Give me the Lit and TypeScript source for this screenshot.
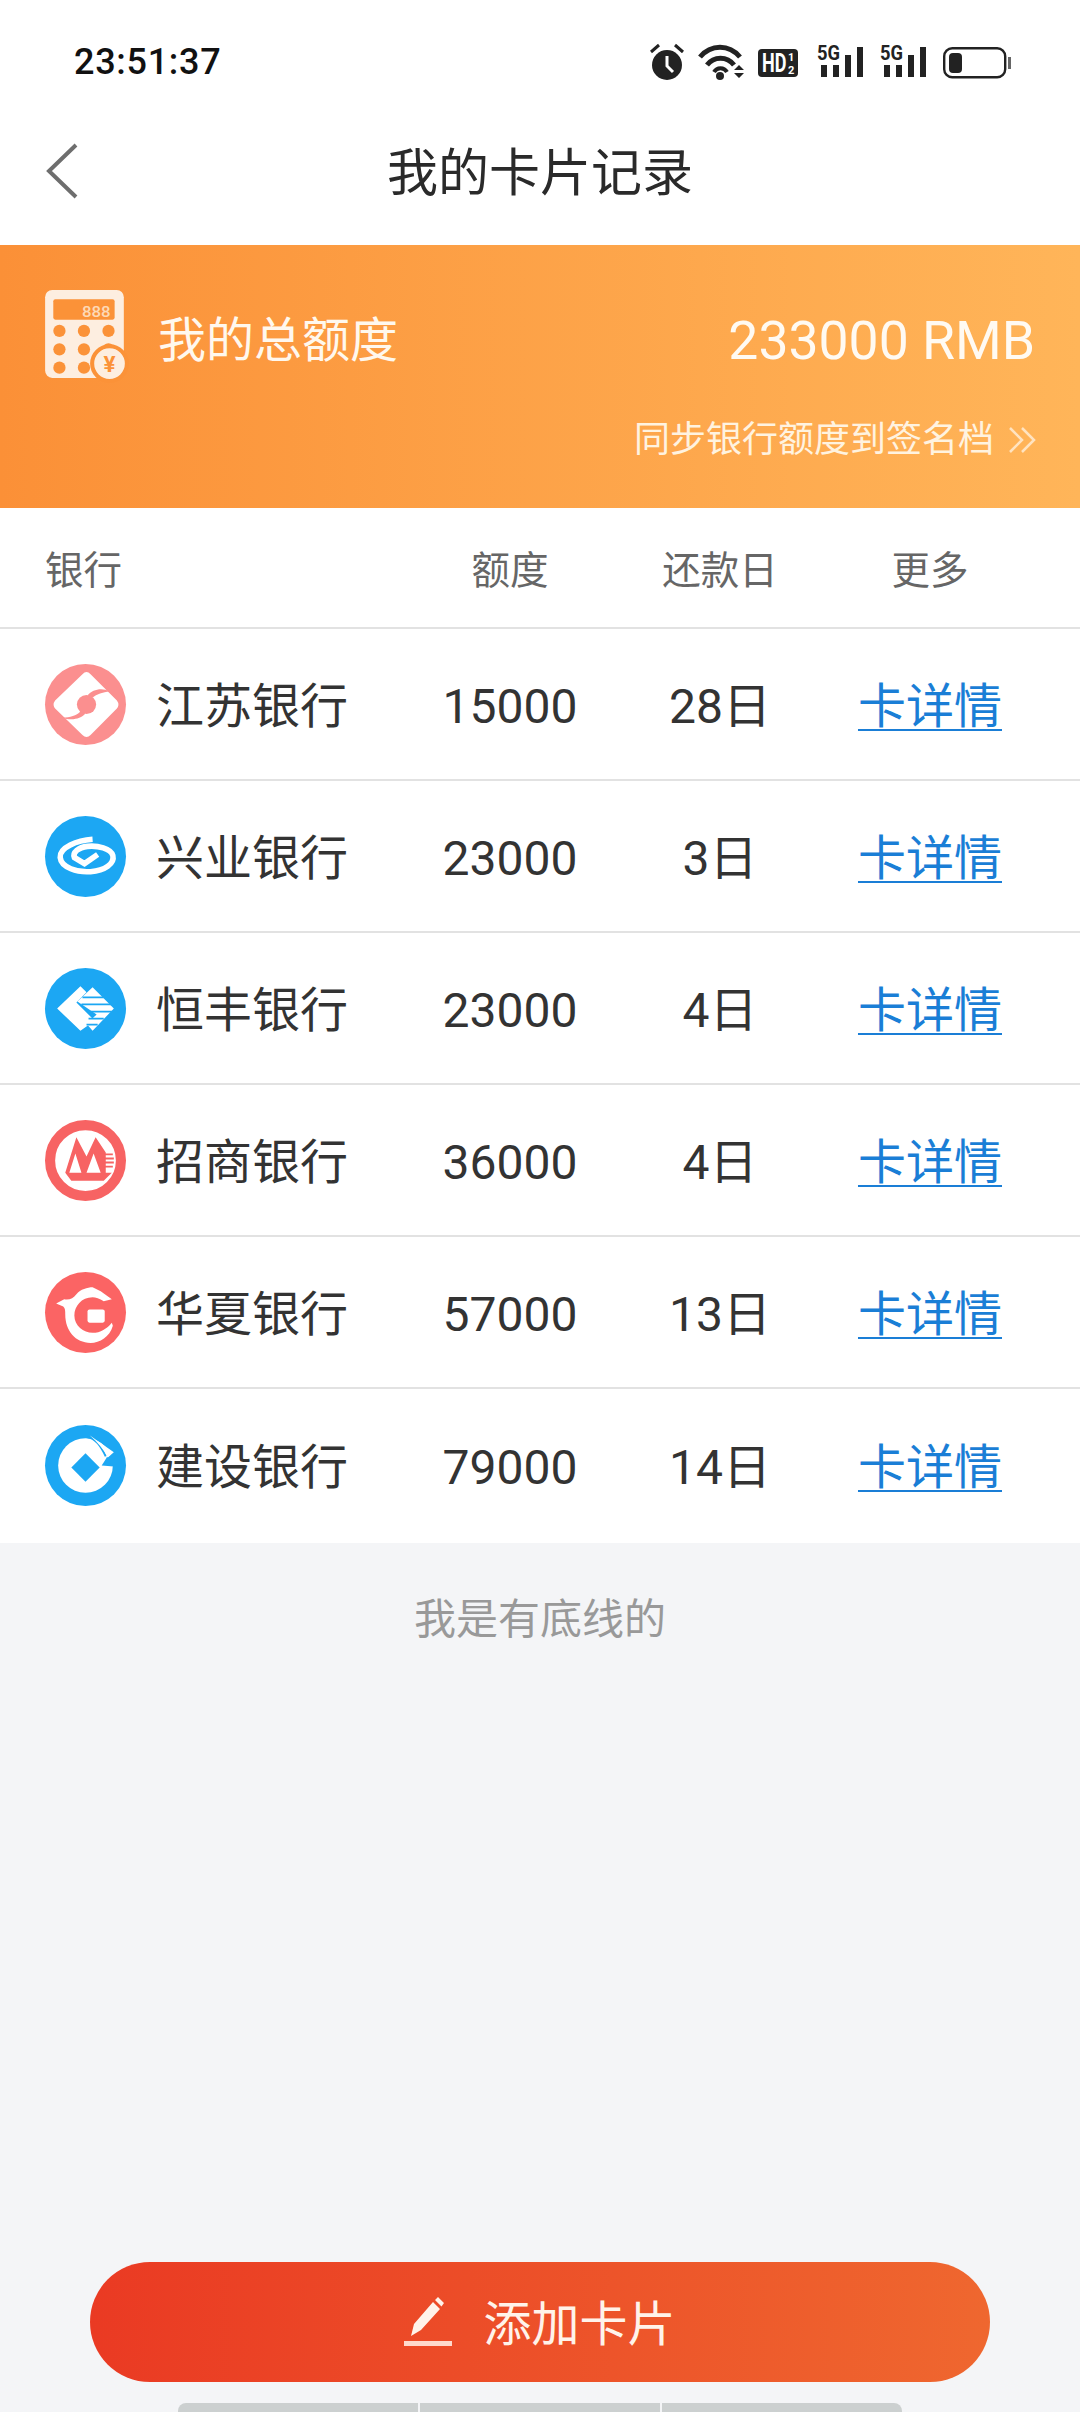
import { LitElement, html, css, svg } from "lit";
import { customElement } from "lit/decorators.js";

const logos: Record<string, unknown> = {
  js: svg`<circle cx="40" cy="40" r="40" fill="#fb8f8f"/>
    <path d="M41 8 Q43 8 45 10 L71 36 Q74 40 71 44 L45 70 Q41 74 37 70 L10 44 Q7 40 10 36 L37 10 Q39 8 41 8Z" fill="#fff"/>
    <circle cx="41" cy="40" r="9.5" fill="#fb8f8f"/>
    <path d="M64 27 C56 23 47 25 42 31 L47 33 C51 30 57 28 64 27Z M17 53 C25 56 35 55 40 49 L35 47 C31 51 25 53 17 53Z" fill="#fb8f8f"/>`,
  xy: svg`<circle cx="40" cy="40" r="40" fill="#1ca7f3"/>
    <path d="M47 23 C32 24 14 31 15 41 C16 51 32 56 45 55 C59 54 69 47 67 39 C65 32 52 29 42 30 C33 31 27 36 29 41 L39 47 L52 38" fill="none" stroke="#fff" stroke-width="5.5"/>`,
  hf: svg`<circle cx="40" cy="40" r="40" fill="#1ca7f3"/>
    <path d="M12 40 L35 18 L41 24 L31 34 L49 52 L35 62Z" fill="#fff"/>
    <path d="M47 19 L68 40 L47 62 L41 55 L51 46 L32 33Z" fill="#fff"/>
    <path d="M37 29 H58 M36 36 H66 M45 43 H66 M43 50 H58 M41 56 H52" stroke="#1ca7f3" stroke-width="1.8"/>`,
  zs: svg`<circle cx="40" cy="40" r="35" fill="#fff" stroke="#f76363" stroke-width="10"/>
    <path d="M20 52 L31 17 L41 36 L50 17 L60 32 L60 52 L66 52 L58 60 L26 60Z" fill="#f76363"/>
    <path d="M24 52 L30 33 L36 52Z M41 52 L48 33 L55 52Z" fill="#fff"/>
    <path d="M55 34 H67 M56 38 H68 M57 42 H68 M58 46 H67" stroke="#f76363" stroke-width="1.8"/>`,
  hx: svg`<circle cx="40" cy="40" r="40" fill="#fb6464"/>
    <path d="M11 31 L19 27 C24 28 28 26 31 22 C35 17 42 15 47 15 L55 19 L66 27 L58 29 C54 26 50 25 47 25 C36 25 29 34 29 43 C29 53 38 60 47 60 C55 60 61 56 66 50 L67 53 C64 64 54 70 45 70 C30 70 20 58 20 42 C20 38 20 36 18 34Z" fill="#fff"/>
    <rect x="42" y="37" width="17" height="13" rx="2" fill="#fff"/>`,
  js2: svg`<circle cx="40" cy="40" r="40" fill="#1ca7f3"/>
    <circle cx="40" cy="40" r="27" fill="#fff"/>
    <path d="M40 28 L54 42 L40 56 L26 42Z" fill="#1ca7f3"/>
    <path d="M56 40 L68 41 L70 26 L61 32Z" fill="#1ca7f3"/>
    <path d="M42 12 C50 13 56 22 60 31" fill="none" stroke="#1ca7f3" stroke-width="2"/>
    <path d="M44 10 L68 27 L62 32 C58 24 52 17 44 10Z" fill="#fff"/>`,
};

const rows = [
  ["js", "江苏银行", "15000", "28日"],
  ["xy", "兴业银行", "23000", "3日"],
  ["hf", "恒丰银行", "23000", "4日"],
  ["zs", "招商银行", "36000", "4日"],
  ["hx", "华夏银行", "57000", "13日"],
  ["js2", "建设银行", "79000", "14日"],
];

@customElement("app-root")
export class AppRoot extends LitElement {
  static styles = css`
    :host {
      display: flex;
      flex-direction: column;
      width: 1080px;
      height: 2412px;
      overflow: hidden;
      background: #f4f5f7;
      font-family: "Roboto", "Noto Sans CJK SC", sans-serif;
      color: #333;
    }
    svg { display: block; flex: none; overflow: visible; }
    .status {
      height: 124px;
      background: #fff;
      display: flex;
      align-items: center;
      box-sizing: border-box;
      padding: 0 69px 0 74px;
    }
    .time { font-size: 36px; font-weight: 500; letter-spacing: 0.7px; color: #111; margin-right: auto; }
    .icons { display: flex; align-items: flex-start; height: 36px; }
    .alarm { margin-right: 15px; }
    .wifi { margin-right: 13px; }
    .hd { margin: 5px 19px 0 0; }
    .sig { margin: -4px 17px 0 0; }
    .bat { margin-top: 3px; }
    .nav {
      height: 121px;
      background: #fff;
      display: grid;
      grid-template-columns: 1fr auto 1fr;
      align-items: center;
      padding-bottom: 28px;
      box-sizing: border-box;
    }
    .nav svg { margin-left: 46px; }
    .title { font-size: 51px; line-height: 60px; padding-top: 6px; color: #2a2a2a; }
    .banner {
      height: 263px;
      box-sizing: border-box;
      padding: 44px 46px 0;
      color: #fff;
      background: linear-gradient(90deg, #fb9037, #ffb559);
    }
    .b1 { display: flex; align-items: center; height: 92px; gap: 31px; }
    .b1 svg { margin-left: -1px; }
    .b1 .label { font-size: 48px; line-height: 60px; padding-top: 11px; color: #fff8ee; }
    .b1 .amount { margin-left: auto; font-size: 53.5px; line-height: 60px; padding-top: 11px; color: #fffaf2; margin-right: -1px; }
    .b2 { display: flex; justify-content: flex-end; align-items: center; gap: 14px; margin-top: 34px; font-size: 36px; line-height: 50px; color: #fff3e0; margin-right: -2px; }
    .thead, .row {
      display: grid;
      grid-template-columns: 358px 214px 206px 214px;
      padding-left: 45px;
      align-items: center;
      background: #fff;
      text-align: center;
      border-bottom: 2px solid #e2e2e2;
      box-sizing: border-box;
    }
    .thead { height: 121px; font-size: 38.5px; line-height: 50px; padding-top: 6px; color: #666; }
    .row { height: 152px; font-size: 48px; line-height: 60px; }
    .row > span, .bank > span { padding-top: 6px; }
    .row.last { height: 154px; border-bottom: none; padding-bottom: 2px; }
    .thead > :first-child { text-align: left; }
    .bank { display: flex; align-items: center; gap: 30px; }
    .link { color: #1a7ed6; text-decoration: underline; text-underline-offset: 6px; text-decoration-thickness: 2px; }
    .end { text-align: center; font-size: 42px; line-height: 60px; color: #999; padding-top: 47px; }
    .spacer { flex: 1; }
    .btn {
      margin: 0 90px;
      height: 120px;
      border-radius: 60px;
      display: flex;
      align-items: center;
      justify-content: center;
      gap: 31px;
      font-size: 48px;
      line-height: 60px;
      color: #fff3ea;
      background: linear-gradient(90deg, #ea3a23, #ef672f);
    }
    .btn span { padding-top: 6px; }
    .home { display: flex; justify-content: center; gap: 2px; margin-top: 21px; height: 9px; }
    .home i { background: #ccd0d0; width: 240px; }
    .home i:first-child { border-radius: 8px 0 0 0; }
    .home i:last-child { border-radius: 0 8px 0 0; }
  `;

  render() {
    return html`
      <div class="status">
        <span class="time">23:51:37</span>
        <div class="icons">
          <svg class="alarm" width="34" height="36" viewBox="0 0 34 36">
            <circle cx="17" cy="21" r="15" fill="#222"/>
            <path d="M17 12 V22 L23 28" fill="none" stroke="#fff" stroke-width="3"/>
            <path d="M1 8 L9 1 M33 8 L25 1" stroke="#222" stroke-width="3"/>
          </svg>
          <svg class="wifi" width="46" height="36" viewBox="0 0 46 36">
            <path d="M1 13 C12 0 30 0 41 13" fill="none" stroke="#222" stroke-width="5"/>
            <path d="M8 21 C15 12 28 12 35 21" fill="none" stroke="#222" stroke-width="5"/>
            <path d="M15 28 C18 23 25 23 28 28" fill="none" stroke="#222" stroke-width="4"/>
            <circle cx="21" cy="32" r="4" fill="#222"/>
            <path d="M35 26 L40 21 L45 26Z M35 29 H45 L40 34Z" fill="#222"/>
          </svg>
          <svg class="hd" width="40" height="28" viewBox="0 0 40 28">
            <rect width="40" height="28" rx="4" fill="#222"/>
            <text transform="translate(4 23) scale(.72 1)" font-family="Roboto" font-size="25" font-weight="700" fill="#fff">HD</text>
            <text x="30" y="12" font-family="Roboto" font-size="11" font-weight="700" fill="#fff">1</text>
            <text x="30" y="25" font-family="Roboto" font-size="11" font-weight="700" fill="#fff">2</text>
          </svg>
          ${[0, 1].map(
            () => svg`<svg class="sig" width="46" height="38" viewBox="0 -4 46 38">
              <text x="0" y="16" font-family="Roboto" font-size="21" font-weight="700" fill="#222" textLength="23" lengthAdjust="spacingAndGlyphs">5G</text>
              <rect x="4" y="21" width="6" height="12" fill="#222"/>
              <rect x="16" y="21" width="6" height="12" fill="#222"/>
              <rect x="28" y="11" width="6" height="22" fill="#222"/>
              <rect x="40" y="3" width="6" height="30" fill="#222"/>
            </svg>`
          )}
          <svg class="bat" width="68" height="32" viewBox="0 0 68 32">
            <rect x="1.2" y="1.2" width="61" height="29" rx="8" fill="none" stroke="#222" stroke-width="2.4"/>
            <rect x="6" y="6" width="13" height="20" rx="4" fill="#222"/>
            <rect x="65" y="10" width="3" height="12" fill="#666"/>
          </svg>
        </div>
      </div>
      <div class="nav">
        <svg width="32" height="56" viewBox="0 0 32 56">
          <path d="M30 2 L3 28 L30 54" fill="none" stroke="#6e6e6e" stroke-width="4"/>
        </svg>
        <div class="title">我的卡片记录</div>
        <span></span>
      </div>
      <div class="banner">
        <div class="b1">
          <svg width="82" height="92" viewBox="0 0 80 90">
            <rect x="0" y="1" width="77" height="86" rx="7" fill="#fdeee0"/>
            <rect x="8" y="10" width="60" height="20" rx="2" fill="#fb9238"/>
            <text x="36" y="27" font-family="Roboto" font-size="15" font-weight="500" fill="#fdd9b6" textLength="28" lengthAdjust="spacingAndGlyphs">888</text>
            ${[41, 59, 77].map((y) => [14, 38, 62].map((x) => svg`<circle cx=${x} cy=${y} r="6" fill="#fb9238"/>`))}
            <circle cx="63" cy="73" r="17" fill="#fdeee0" stroke="#fb9238" stroke-width="4"/>
            <text x="63" y="81" text-anchor="middle" font-family="Roboto" font-size="22" font-weight="700" fill="#fb9238">¥</text>
          </svg>
          <span class="label">我的总额度</span>
          <span class="amount">233000 RMB</span>
        </div>
        <div class="b2">
          <span>同步银行额度到签名档</span>
          <svg width="28" height="30" viewBox="0 0 28 30">
            <path d="M2 3 L14 15 L2 27 M14 3 L26 15 L14 27" fill="none" stroke="#ffe3c0" stroke-width="2.5"/>
          </svg>
        </div>
      </div>
      <div class="thead">
        <span>银行</span><span>额度</span><span>还款日</span><span>更多</span>
      </div>
      ${rows.map(
        ([k, name, limit, day], i) => html`
          <div class="row ${i === rows.length - 1 ? "last" : ""}">
            <div class="bank">
              <svg width="81" height="81" viewBox="0 0 80 80">${logos[k]}</svg>
              <span>${name}</span>
            </div>
            <span>${limit}</span>
            <span>${day}</span>
            <span class="link">卡详情</span>
          </div>
        `
      )}
      <div class="end">我是有底线的</div>
      <div class="spacer"></div>
      <div class="btn">
        <svg width="48" height="48" viewBox="0 0 48 48">
          <path d="M7 38 L10 26 L29 4 L36 11 L17 32Z M31 2 L34 -1 L40 5 L37.5 8.5Z" fill="#fff3ea"/>
          <rect x="0" y="43" width="48" height="5" fill="#ffd9cc"/>
        </svg>
        <span>添加卡片</span>
      </div>
      <div class="home"><i></i><i></i><i></i></div>
    `;
  }
}
